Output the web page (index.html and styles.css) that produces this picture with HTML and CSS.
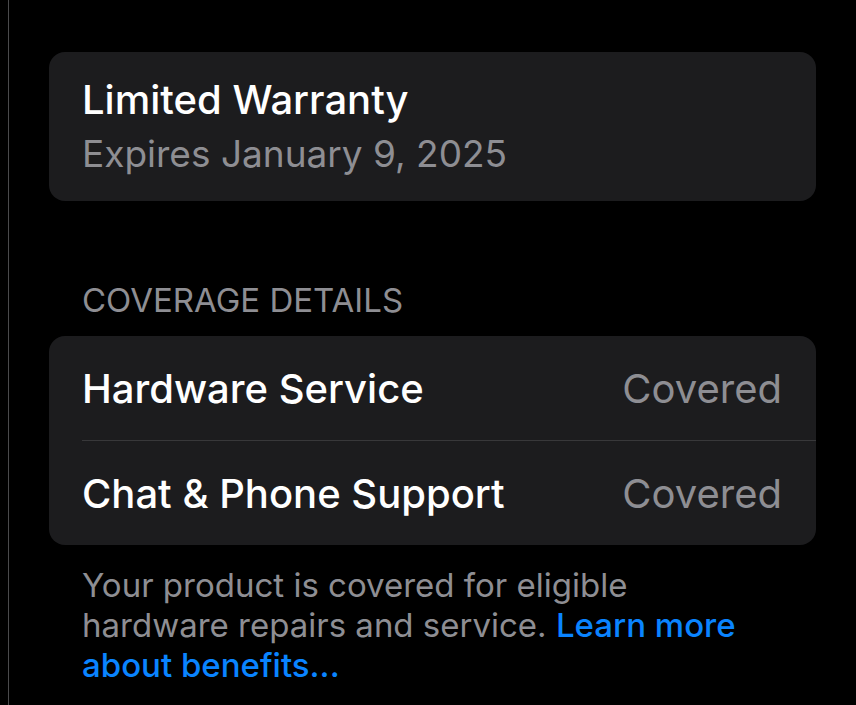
FILE: index.html
```html
<!DOCTYPE html>
<html lang="en">
<head>
  <meta charset="UTF-8" />
  <title>Coverage</title>
  <link rel="stylesheet" href="styles.css">
</head>
<body>
  <div class="page">
    <div class="card warranty">
      <div class="warranty-title">Limited Warranty</div>
      <div class="warranty-sub">Expires January 9, 2025</div>
    </div>

    <div class="section-header">COVERAGE DETAILS</div>
    <div class="card list">
      <div class="row">
        <span class="row-label">Hardware Service</span>
        <span class="row-value">Covered</span>
      </div>
      <div class="row">
        <span class="row-label">Chat &amp; Phone Support</span>
        <span class="row-value">Covered</span>
      </div>
    </div>
    <p class="footer">Your product is covered for eligible hardware repairs and service. <a href="#">Learn more about benefits...</a></p>
  </div>
</body>
</html>
```

FILE: styles.css
```css
body {
  margin: 0;
  background-color: #000;
  color: #fff;
  font-family: Inter, "Noto Sans", sans-serif;
  height: 705px;
  overflow: hidden;
}
.page {
  margin-left: 8px;
  border-left: 1px solid #4a4a4c;
  height: 100%;
  padding: 52px 40px 0 40px;
  box-sizing: border-box;
}
.card {
  background-color: #1c1c1e;
  border-radius: 16px;
}
.warranty {
  height: 149px;
  padding: 0 33px;
  box-sizing: border-box;
  display: flex;
  flex-direction: column;
  justify-content: center;
}
.warranty-title {
  font-size: 40px;
  font-weight: 500;
  line-height: 54px;
}
.warranty-sub {
  font-size: 37px;
  color: #8e8e93;
  line-height: 54px;
}
.section-header {
  font-size: 33px;
  color: #8e8e93;
  padding: 0 33px;
  margin-top: 80px;
  line-height: 38px;
  margin-bottom: 17px;
}
.list {
  padding-left: 33px;
}
.row {
  height: 104px;
  display: flex;
  align-items: center;
  justify-content: space-between;
  padding-right: 34px;
  font-size: 40px;
}
.row + .row {
  border-top: 1px solid #38383a;
}
.row-label {
  font-weight: 500;
}
.row-value {
  color: #8e8e93;
}
.footer {
  margin: 20px 0 0 33px;
  width: 680px;
  font-size: 33px;
  line-height: 40px;
  color: #8e8e93;
}
.footer a {
  color: #0a84ff;
  text-decoration: none;
  font-weight: 500;
}
```
